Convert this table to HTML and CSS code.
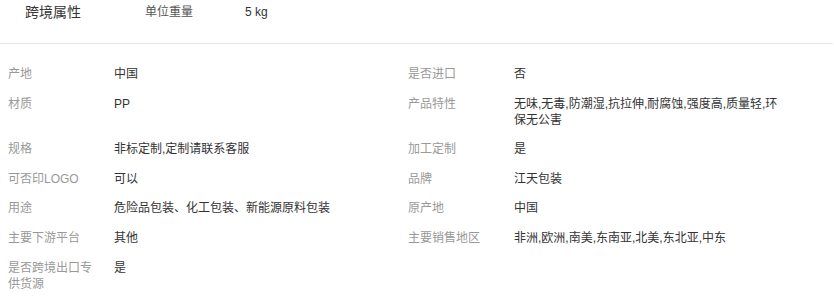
FILE: index.html
```html
<!DOCTYPE html>
<html lang="zh-CN">
<head>
<meta charset="utf-8">
<title>跨境属性</title>
<link rel="stylesheet" href="styles.css">
</head>
<body>
<div class="attr-head">
  <div class="attr-title">跨境属性</div>
  <div class="attr-head-label">单位重量</div>
  <div class="attr-head-value">5 kg</div>
</div>
<div class="attr-grid">
  <div class="cell"><div class="label">产地</div><div class="value">中国</div></div>
  <div class="cell"><div class="label">是否进口</div><div class="value">否</div></div>
  <div class="cell"><div class="label">材质</div><div class="value">PP</div></div>
  <div class="cell"><div class="label">产品特性</div><div class="value">无味,无毒,防潮湿,抗拉伸,耐腐蚀,强度高,质量轻,环保无公害</div></div>
  <div class="cell"><div class="label">规格</div><div class="value">非标定制,定制请联系客服</div></div>
  <div class="cell"><div class="label">加工定制</div><div class="value">是</div></div>
  <div class="cell"><div class="label">可否印LOGO</div><div class="value">可以</div></div>
  <div class="cell"><div class="label">品牌</div><div class="value">江天包装</div></div>
  <div class="cell"><div class="label">用途</div><div class="value">危险品包装、化工包装、新能源原料包装</div></div>
  <div class="cell"><div class="label">原产地</div><div class="value">中国</div></div>
  <div class="cell"><div class="label">主要下游平台</div><div class="value">其他</div></div>
  <div class="cell"><div class="label">主要销售地区</div><div class="value">非洲,欧洲,南美,东南亚,北美,东北亚,中东</div></div>
  <div class="cell"><div class="label">是否跨境出口专供货源</div><div class="value">是</div></div>
</div>
</body>
</html>
```
FILE: styles.css
```css
html, body {
  margin: 0;
  padding: 0;
  background: #fff;
}
body {
  font-family: "Liberation Sans", Arial, "Noto Sans CJK SC", sans-serif;
  color: #333;
  width: 834px;
}
.attr-head {
  display: flex;
  align-items: flex-start;
  height: 43px;
  padding-left: 25px;
  border-bottom: 1px solid #e5e5e5;
  margin-right: 1px;
}
.attr-title {
  width: 120px;
  font-size: 14px;
  line-height: 24px;
  color: #333;
}
.attr-head-label {
  width: 100px;
  font-size: 12px;
  line-height: 24px;
  color: #555;
}
.attr-head-value {
  font-size: 12px;
  line-height: 24px;
  color: #333;
}
.attr-grid {
  display: grid;
  grid-template-columns: 400px 400px;
  row-gap: 13.6px;
  padding-top: 22px;
}
.cell {
  display: flex;
  align-items: flex-start;
  padding-left: 8px;
  font-size: 12px;
  line-height: 16px;
}
.label {
  width: 86px;
  margin-right: 20px;
  color: #999;
  flex-shrink: 0;
}
.value {
  width: 270px;
  color: #333;
}
```
